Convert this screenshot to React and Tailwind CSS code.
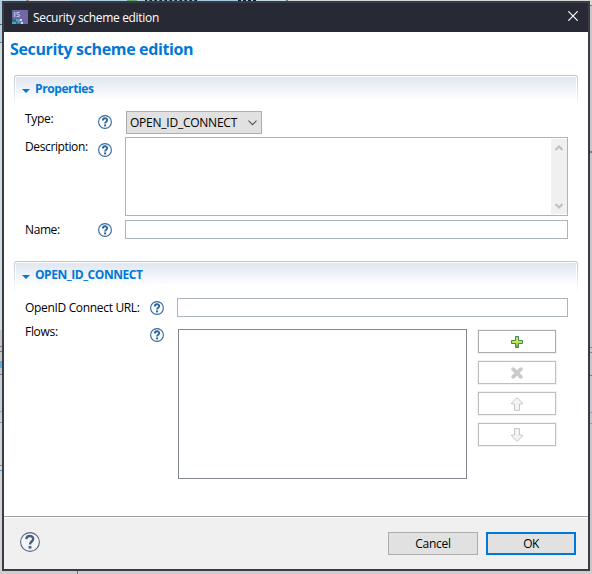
const SANS = "font-['Open_Sans','Noto_Sans',sans-serif]";

function Help() {
  return (
    <svg width="14" height="14" viewBox="0 0 14 14" className="mr-px block shrink-0" fill="none">
      <circle cx="7" cy="7" r="6.4" stroke="#35699b" strokeWidth="1.1" fill="#fbfcfd" />
      <path d="M4.9 5.4C4.9 2.7 9.2 2.6 9.2 5.1C9.2 6.8 7.1 6.6 7.1 8.6" stroke="#2d6798" strokeWidth="1.9" />
      <path d="M7.1 9.4v2" stroke="#2d6798" strokeWidth="2" />
    </svg>
  );
}

function BigHelp() {
  return (
    <svg width="20" height="20" viewBox="0 0 20 20" className="block shrink-0" fill="none">
      <circle cx="10" cy="10" r="9.4" stroke="#546788" strokeWidth="1.1" fill="#f6f6f6" />
      <path d="M6.3 7.2C6.6 3 13.2 3 13.2 6.9C13.2 9.7 10 9.4 10 12.6" stroke="#4a5f85" strokeWidth="2.4" />
      <path d="M10 14v2.6" stroke="#4a5f85" strokeWidth="2.8" />
    </svg>
  );
}

function SectionHeader({ children, tracking }) {
  return (
    <div className="h-[32px] rounded-t-[3px] bg-gradient-to-b from-[#b7c5d9] to-white p-px pb-0">
      <div className="h-full rounded-t-[2px] bg-white pt-px px-px">
        <div className="flex h-[23px] items-center bg-gradient-to-b from-[#e0e7f1] to-white pl-[6px]">
          <svg width="8" height="4" viewBox="0 0 8 4" className="mt-[4px] block"><path d="M0 0h8L4 4z" fill="#0078d7" /></svg>
          <span className={`ml-[5px] mt-px text-[12px] leading-[16px] font-bold text-[#0078d7] whitespace-nowrap ${tracking}`}>{children}</span>
        </div>
      </div>
    </div>
  );
}

function ListButton({ children, disabled }) {
  return (
    <div className="flex h-[25px] w-[80px] shrink-0 border border-[#f2f2f2]">
      <div className={`flex flex-1 items-center justify-center border bg-white ${disabled ? 'border-[#bfbfbf]' : 'border-[#adadad]'}`}>{children}</div>
    </div>
  );
}

function Arrow({ down }) {
  return (
    <svg width="12" height="14" viewBox="0 0 12 14" className={down ? 'rotate-180' : ''}>
      <path d="M6 .6L11.4 6v1H8.5v6.4h-5V7H.6V6z" fill="#f4f4f4" stroke="#c6c6c6" />
    </svg>
  );
}

function Backdrop() {
  return (
    <div className="flex h-px shrink-0 bg-[#d3d9d2]">
      <div className="w-[26px] bg-[#b5d3e2]" />
      <div className="w-[3px] bg-[#8b8f93]" />
      <div className="w-[41px] bg-[#cfd8dc]" />
      <div className="w-[57px] bg-[#abd0e2]" />
      <div className="w-[10px] bg-[#67a56b]" />
      <div className="w-[8px] bg-[#abd0e2]" />
      <div className="w-[53px] bg-[repeating-linear-gradient(90deg,#1c2731_0_2px,#8fb9cc_2px_4px,#45606e_4px_5px)]" />
      <div className="w-[40px] bg-[#a5cbe0]" />
      <div className="w-[18px] bg-[repeating-linear-gradient(90deg,#14202a_0_3px,#a5cbe0_3px_5px)]" />
      <div className="w-[30px] bg-[#c5dbe2]" />
      <div className="w-[2px] bg-[#777777]" />
    </div>
  );
}

export default function App() {
  return (
    <div className={`flex h-[574px] w-[592px] flex-col overflow-hidden bg-[#cbc8c9] text-[12px] leading-[16px] text-black ${SANS}`}>
      <Backdrop />
      <div className="flex h-[570px] shrink-0">
        <div className="flex w-[2px] shrink-0 flex-col bg-[#cbd9de]">
          <div className="h-[23px] bg-[#a9cbdc]" />
          <div className="h-px bg-[#5e6367]" />
          <div className="h-[17px] bg-[#b0d1e1]" />
          <div className="h-px bg-[#777f84]" />
          <div className="h-[287px] bg-[#cfdcde]" />
          <div className="h-[16px] bg-[#c8c6c5]" />
          <div className="h-px bg-[#777777]" />
          <div className="h-[4px] bg-[#c8c6c5]" />
          <div className="h-px bg-[#777777]" />
          <div className="h-[9px] bg-[#c8c6c5]" />
          <div className="h-[7px] bg-[#5db0d6]" />
          <div className="h-[6px] bg-[#c8c6c5]" />
          <div className="h-px bg-[#777777]" />
          <div className="h-[36px] bg-[#c5d0d8]" />
          <div className="h-px bg-[#7ba6c6]" />
          <div className="h-[10px] bg-[#c5d0d8]" />
          <div className="h-px bg-[#9a9a9a]" />
          <div className="h-[42px] bg-[#d0d5d6]" />
          <div className="h-px bg-[#4b9bd0]" />
          <div className="h-[4px] bg-[#d9dccf]" />
          <div className="h-px bg-[#4b9bd0]" />
          <div className="flex-1 bg-[#d3d5d2]" />
        </div>
        <div className="flex h-[570px] w-[588px] shrink-0 flex-col border-2 border-[#3b3a48] bg-white">
          <div className="flex h-[29px] shrink-0 items-center bg-[#272935] pl-[8px] pr-[10px] text-white">
            <svg width="16" height="14" viewBox="0 0 16 14" className="mb-px">
              <rect width="16" height="14" fill="#7068a6" />
              <path d="M0 8l3 2 3-2 1 3-2 3H0z" fill="#455f86" />
              <path d="M4 9h5v2l-2 2-3-2zM0 12h4v2H0z" fill="#35b3bd" />
              <path d="M8 9h2v2H8zM9 12h2v2H9z" fill="#d0e2ec" />
              <text x="1.6" y="7" fontSize="7.5" fontWeight="600" fill="#d8d5ec">IS</text>
            </svg>
            <span className="ml-[5px] whitespace-nowrap tracking-[-0.32px]">Security scheme edition</span>
            <svg width="10" height="10" viewBox="0 0 10 10" className="ml-auto mb-[3px]"><path d="M.3.3l9.4 9.4M9.7.3L.3 9.7" stroke="#fff" strokeWidth="1.2" /></svg>
          </div>
          <div className="flex h-[484px] shrink-0 flex-col">
            <h1 className="ml-[6px] mt-[6px] h-[22px] whitespace-nowrap text-[16px] font-bold leading-[22px] tracking-[-0.36px] text-[#0078d7]">Security scheme edition</h1>
            <div className="ml-[10px] mr-[10px] mt-[15px]">
              <SectionHeader tracking="tracking-[-0.4px]">Properties</SectionHeader>
              <div className="ml-[11px] mr-[10px] mt-[4px] flex h-[23px]">
                <span className="w-[73px] whitespace-nowrap tracking-[-0.3px]">Type:</span>
                <div className="mt-[4px]"><Help /></div>
                <div className="ml-[13px] flex h-[23px] w-[136px] items-center border border-[#adadad] bg-[#e1e1e1] pl-[3px] pr-[4px]">
                  <span className="whitespace-nowrap tracking-[-0.24px]">OPEN_ID_CONNECT</span>
                  <svg width="9" height="6" viewBox="0 0 9 6" className="ml-auto mt-px" fill="none"><path d="M.5.7l4 4 4-4" stroke="#555" strokeWidth="1.1" /></svg>
                </div>
              </div>
              <div className="ml-[11px] mr-[10px] mt-[3px] flex h-[79px]">
                <span className="mt-[2px] w-[73px] whitespace-nowrap tracking-[-0.38px]">Description:</span>
                <div className="mt-[6px]"><Help /></div>
                <div className="ml-[12px] flex flex-1 justify-end border border-[#abb3bd] py-px">
                  <div className="flex w-[16px] flex-col items-center justify-between bg-[#f0f0f0] pb-[5px] pt-[6px]">
                    <svg width="8" height="6" viewBox="0 0 8 6" fill="none"><path d="M.5 5L4 1.5 7.5 5" stroke="#bfbfbf" strokeWidth="2.1" /></svg>
                    <svg width="8" height="6" viewBox="0 0 8 6" fill="none"><path d="M.5 1L4 4.5 7.5 1" stroke="#bfbfbf" strokeWidth="2.1" /></svg>
                  </div>
                </div>
              </div>
              <div className="ml-[11px] mr-[10px] mt-[4px] flex h-[19px]">
                <span className="mt-[2px] w-[73px] whitespace-nowrap tracking-[-0.4px]">Name:</span>
                <div className="mt-[3px]"><Help /></div>
                <div className="ml-[12px] flex-1 border border-[#abb3bd]" />
              </div>
            </div>
            <div className="ml-[10px] mr-[10px] mt-[22px]">
              <SectionHeader tracking="tracking-[-0.46px]">OPEN_ID_CONNECT</SectionHeader>
              <div className="ml-[11px] mr-[10px] mt-[5px] flex h-[19px]">
                <span className="mt-[2px] w-[125px] whitespace-nowrap tracking-[-0.33px]">OpenID Connect URL:</span>
                <div className="mt-[3px]"><Help /></div>
                <div className="ml-[12px] flex-1 border border-[#abb3bd]" />
              </div>
              <div className="ml-[11px] mt-[12px] flex h-[150px]">
                <span className="-mt-[5px] w-[125px] whitespace-nowrap tracking-[-0.3px]">Flows:</span>
                <div className="-mt-px"><Help /></div>
                <div className="ml-[13px] w-[289px] border border-[#828790]" />
                <div className="ml-[10px] flex flex-col gap-[6px]">
                  <ListButton>
                    <svg width="12" height="12" viewBox="0 0 12 12">
                      <defs><linearGradient id="plus" x1="0" y1="0" x2="0" y2="1"><stop offset="0" stopColor="#b9d868" /><stop offset=".45" stopColor="#dbe54b" /><stop offset="1" stopColor="#5da63f" /></linearGradient></defs>
                      <path d="M4.5.5h3v4h4v3h-4v4h-3v-4h-4v-3h4z" fill="url(#plus)" stroke="#3f8a58" />
                    </svg>
                  </ListButton>
                  <ListButton disabled><svg width="12" height="12" viewBox="0 0 12 12"><path d="M2.2 2.2l7.6 7.6M9.8 2.2L2.2 9.8" stroke="#cbcbcb" strokeWidth="3.8" strokeLinecap="round" /></svg></ListButton>
                  <ListButton disabled><Arrow /></ListButton>
                  <ListButton disabled><Arrow down /></ListButton>
                </div>
              </div>
            </div>
          </div>
          <div className="flex flex-1 items-start border-t border-[#9f9f9f] bg-[#f0f0f0]">
            <div className="flex w-full items-start border-t border-white pl-[16px] pr-[12px] pt-[14px]">
              <BigHelp />
              <div className="ml-auto flex gap-[8px]">
                <div className="flex h-[23px] w-[90px] items-center justify-center border border-[#adadad] bg-[#e1e1e1] tracking-[-0.3px]">Cancel</div>
                <div className="flex h-[23px] w-[90px] items-center justify-center border-2 border-[#0078d7] bg-[#e1e1e1] tracking-[-0.5px]">OK</div>
              </div>
            </div>
          </div>
        </div>
        <div className="flex flex-1 flex-col bg-[#c8c6c6]">
          <div className="h-[4px] bg-[#d8dad6]" />
          <div className="h-px bg-[#77777b]" />
          <div className="h-[145px]" />
          <div className="h-[2px] bg-[#777777]" />
          <div className="h-[194px]" />
          <div className="h-px bg-[#8a8a8a]" />
          <div className="h-[4px]" />
          <div className="h-px bg-[#8a8a8a]" />
          <div className="h-[22px]" />
          <div className="h-px bg-[#777777]" />
          <div className="h-[36px]" />
          <div className="h-px bg-[#7f9fb8]" />
          <div className="h-[10px]" />
          <div className="h-px bg-[#8aa0b0]" />
        </div>
      </div>
      <div className="flex flex-1 bg-[#cfcccd]">
        <div className="ml-[77px] w-px bg-[#77777b]" />
      </div>
    </div>
  );
}
